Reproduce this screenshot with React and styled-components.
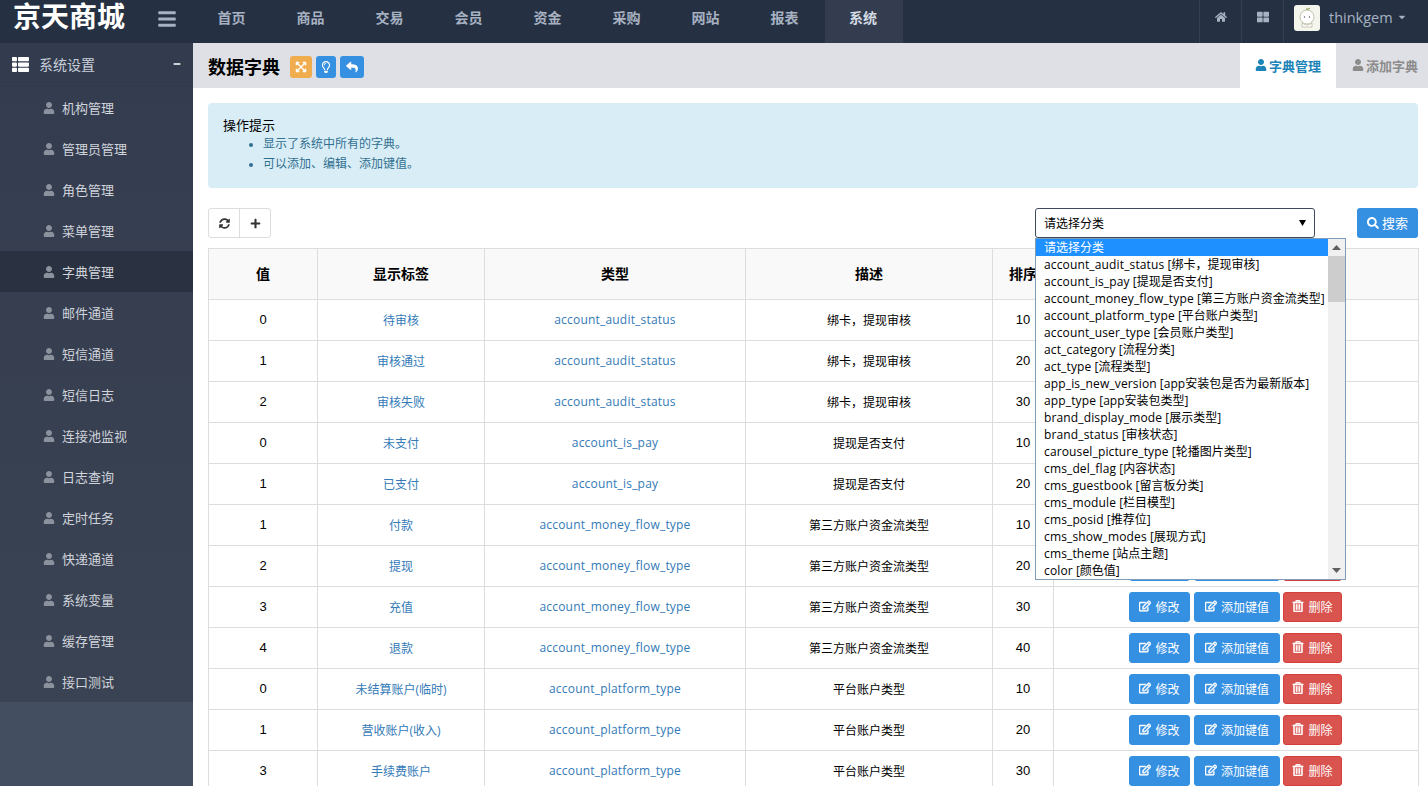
import React from 'react';
import styled, { createGlobalStyle } from 'styled-components';
import { FaUser, FaHome, FaThLarge, FaThList, FaSearch, FaPlus, FaRegEdit, FaRegTrashAlt, FaReply, FaExpandArrowsAlt, FaRegLightbulb, FaSyncAlt, FaBars, FaMinus, FaCaretDown } from 'react-icons/fa';

const Global = createGlobalStyle`
  html, body { margin: 0; padding: 0; height: 100%; overflow: hidden; background: #fff; }
  * { box-sizing: border-box; }
  body { font-family: "Liberation Sans", "Noto Sans CJK SC", sans-serif; font-size: 13px; color: #000; }
`;
const Page = styled.div`width: 1428px; height: 786px; overflow: hidden; display: flex; flex-direction: column;`;
const Top = styled.header`height: 43px; flex: none; background: #253142; display: flex; align-items: stretch;`;
const Logo = styled.div`width: 149px; padding-left: 13px; font-size: 28px; font-weight: 700; color: #fff; line-height: 35px; white-space: nowrap;`;
const Burger = styled.div`width: 44px; display: flex; align-items: center; color: #a7b1c2; font-size: 20px; padding-left: 8px; padding-bottom: 6px;`;
const Nav = styled.nav`display: flex; flex: 1;`;
const NavItem = styled.div`
  width: ${p => p.$active ? 78 : 79}px; text-align: center; padding-right: 2px; line-height: 37px; font-size: 14px; font-weight: 700;
  color: ${p => p.$active ? '#d5dbe3' : '#a7b1c2'}; background: ${p => p.$active ? '#333d4f' : 'transparent'};
`;
const TopRight = styled.div`display: flex; align-items: stretch; width: 229px;`;
const TopIcon = styled.div`width: 42px; border-left: 1px solid #334052; display: flex; justify-content: center; padding-top: 11px; color: #a7b1c2; font-size: 12px;`;
const User = styled.div`flex: 1; border-left: 1px solid #334052; display: flex; align-items: flex-start; padding: 5px 0 0 10px; color: #a7b1c2; font-size: 15px;`;
const Avatar = styled.svg`width: 26px; height: 26px; border-radius: 3px; background: #f4f6ee; flex: none;`;
const UserName = styled.span`margin: 3px 4px 0 9px; font-family: "Open Sans", "Liberation Sans", sans-serif; font-size: 14.5px;`;
const Caret = styled.span`margin-top: 7px; font-size: 10px;`;
const Body = styled.div`display: flex; flex: 1; min-height: 0;`;
const Side = styled.aside`width: 193px; flex: none; background: #434f60;`;
const SideHead = styled.div`
  height: 44px; background: #333c4f; border-bottom: 1px solid #2d3a4a; color: #c9cfd9; display: flex; align-items: center;
  padding: 0 12px 1px; font-size: 14px; font-weight: 400;
  svg { color: #fff; font-size: 17px; margin-right: 10px; }
  span { flex: 1; }
`;
const SideMinus = styled(FaMinus)`&& { font-size: 8px; margin: 0; }`;
const SideList = styled.div`background: linear-gradient(#343c4f, #3a4353);`;
const SideItem = styled.div`
  height: 41px; display: flex; align-items: center; padding-left: 43px; color: #d0d4db; font-size: 13px; font-weight: 400;
  background: ${p => p.$active ? '#2a3140' : 'transparent'};
  svg { color: #8b929d; font-size: 12px; margin-right: 7px; }
`;
const Main = styled.main`flex: 1; min-width: 0; display: flex; flex-direction: column;`;
const SubHead = styled.div`height: 45px; flex: none; background: #dfe0e5; display: flex; align-items: stretch; padding-left: 15px;`;
const Title = styled.h1`margin: 0; font-size: 18px; font-weight: 700; line-height: 50px; color: #000; margin-right: 10px;`;
const Tools = styled.div`display: flex; gap: 4px; align-items: center; flex: 1; padding-top: 2px;`;
const Tool = styled.div`
  width: ${p => p.$w}px; height: 22px; border-radius: 3px; background: ${p => p.$c}; color: #fff; display: flex;
  align-items: center; justify-content: center; font-size: 12px;
`;
const Tab = styled.div`
  display: flex; align-items: center; gap: 2px; font-weight: 700; font-size: 13px; padding-bottom: 1px;
  width: ${p => p.$w}px; background: ${p => p.$active ? '#fff' : 'transparent'}; color: ${p => p.$active ? '#1c84b8' : '#8c8c8c'};
  padding-left: ${p => p.$active ? 15 : 16}px; svg { font-size: 12px; }
`;
const Content = styled.div`flex: 1; min-height: 0; padding: 15px 10px 0 15px; position: relative;`;
const Alert = styled.div`height: 85px; background: #d9edf7; border-radius: 4px; padding: 15px; font-size: 13px; line-height: 16px;`;
const AlertList = styled.ul`margin: 0; padding-left: 40px; color: #31708f; font-size: 12px; li { line-height: 20px; }`;
const Bar = styled.div`display: flex; margin-top: 20px; height: 30px; align-items: stretch;`;
const Group = styled.div`display: flex; width: 63px; border: 1px solid #ddd; border-radius: 3px;`;
const GroupBtn = styled.div`flex: 1; display: flex; align-items: center; justify-content: center; color: #333; font-size: 11px; & + & { border-left: 1px solid #ddd; }`;
const Select = styled.div`
  margin-left: 764px; width: 280px; border: 1px solid #3f4a5e; border-radius: 3px; display: flex; align-items: center; justify-content: space-between;
  padding: 0 8px 1px 8px; font-size: 12px;
`;
const Arrow = styled.svg`width: 7px; height: 6px; fill: #000;`;
const Search = styled.div`
  margin-left: 42px; width: 61px; background: #3690e2; color: #fff; border-radius: 3px; display: flex; align-items: center; justify-content: center; gap: 3px; font-size: 13px; padding-bottom: 1px;
  svg { font-size: 12px; }
`;
const Table = styled.table`width: 1210px; margin-top: 10px; border-collapse: collapse; table-layout: fixed;`;
const Th = styled.th`height: 51px; background: #f9f9f9; border: 1px solid #ddd; font-size: 14px; font-weight: 700; text-align: center; padding: 0 0 3px;`;
const Td = styled.td`height: 41px; border: 1px solid #ddd; text-align: center; padding: 0 0 1px; font-size: 12px; font-family: "Open Sans", "Noto Sans CJK SC", sans-serif; color: ${p => p.$link ? '#337ab7' : '#000'};`;
const TypeCell = styled(Td)`letter-spacing: .2px;`;
const Num = styled(Td)`font-family: "Liberation Sans", sans-serif; font-size: 13px;`;
const Ops = styled.div`display: flex; justify-content: center; gap: 3px; padding-right: 1px; & > :first-child { margin-right: 1px; }`;
const Btn = styled.div`
  height: 30px; width: ${p => p.$w}px; border-radius: 3px; color: #fff; display: flex; align-items: center; justify-content: center; gap: 4px; font-size: 12px; padding-bottom: 1px;
  font-family: "Liberation Sans", "Noto Sans CJK SC", sans-serif;
  background: ${p => p.$red ? '#d9534f' : '#3690e2'}; border: 1px solid ${p => p.$red ? '#d43f3a' : '#3690e2'};
  svg { font-size: 12px; stroke: currentColor; stroke-width: 24; }
`;
const Drop = styled.div`
  position: absolute; left: 842px; top: 150px; width: 311px; height: 342px; background: #fff; border: 1px solid #7f9db9; display: flex; z-index: 5;
  font-family: "Open Sans", "Noto Sans CJK SC", sans-serif; font-size: 12px;
`;
const Options = styled.div`flex: 1; min-width: 0;`;
const Opt = styled.div`height: 17px; line-height: 17px; padding-left: 8px; white-space: nowrap; background: ${p => p.$sel ? '#1e90ff' : 'transparent'}; color: ${p => p.$sel ? '#fff' : '#000'};`;
const OptKey = styled.span`letter-spacing: .14px;`;
const Scroll = styled.div`width: 17px; background: #f0f0f0; display: flex; flex-direction: column; position: relative;`;
const ScrollBtn = styled.div`height: 17px; display: flex; align-items: center; justify-content: center; svg { width: 9px; height: 5px; fill: #606060; }`;
const Thumb = styled.div`height: 46px; background: #cdcdcd;`;
const ScrollFill = styled.div`flex: 1;`;

const menu = ['机构管理','管理员管理','角色管理','菜单管理','字典管理','邮件通道','短信通道','短信日志','连接池监视','日志查询','定时任务','快递通道','系统变量','缓存管理','接口测试'];
const navs = ['首页','商品','交易','会员','资金','采购','网站','报表','系统'];
const opts = ['请选择分类','account_audit_status [绑卡，提现审核]','account_is_pay [提现是否支付]','account_money_flow_type [第三方账户资金流类型]','account_platform_type [平台账户类型]','account_user_type [会员账户类型]','act_category [流程分类]','act_type [流程类型]','app_is_new_version [app安装包是否为最新版本]','app_type [app安装包类型]','brand_display_mode [展示类型]','brand_status [审核状态]','carousel_picture_type [轮播图片类型]','cms_del_flag [内容状态]','cms_guestbook [留言板分类]','cms_module [栏目模型]','cms_posid [推荐位]','cms_show_modes [展现方式]','cms_theme [站点主题]','color [颜色值]'];
const rows = [
  ['0','待审核','account_audit_status','绑卡，提现审核','10'],
  ['1','审核通过','account_audit_status','绑卡，提现审核','20'],
  ['2','审核失败','account_audit_status','绑卡，提现审核','30'],
  ['0','未支付','account_is_pay','提现是否支付','10'],
  ['1','已支付','account_is_pay','提现是否支付','20'],
  ['1','付款','account_money_flow_type','第三方账户资金流类型','10'],
  ['2','提现','account_money_flow_type','第三方账户资金流类型','20'],
  ['3','充值','account_money_flow_type','第三方账户资金流类型','30'],
  ['4','退款','account_money_flow_type','第三方账户资金流类型','40'],
  ['0','未结算账户(临时)','account_platform_type','平台账户类型','10'],
  ['1','营收账户(收入)','account_platform_type','平台账户类型','20'],
  ['3','手续费账户','account_platform_type','平台账户类型','30'],
];
const widths = [109,167,261,247,61,365];

function Option({ text, sel }) {
  const at = text.indexOf(' [');
  if (at < 0) return <Opt $sel={sel}>{text}</Opt>;
  return <Opt $sel={sel}><OptKey>{text.slice(0, at)}</OptKey>{text.slice(at)}</Opt>;
}

export default function App() {
  return (
    <Page>
      <Global />
      <Top>
        <Logo>京天商城</Logo>
        <Burger><FaBars /></Burger>
        <Nav>{navs.map(n => <NavItem key={n} $active={n === '系统'}>{n}</NavItem>)}</Nav>
        <TopRight>
          <TopIcon><FaHome /></TopIcon>
          <TopIcon><FaThLarge /></TopIcon>
          <User>
            <Avatar viewBox="0 0 26 26">
              <path d="M13 3v3M13 5l3-2" stroke="#7d9a4a" strokeWidth="1" fill="none" />
              <circle cx="13" cy="12" r="7" fill="#fff" stroke="#a9a98c" strokeWidth=".7" />
              <path d="M8 18q5 4 10 0v4H8z" fill="#fff" stroke="#a9a98c" strokeWidth=".6" />
              <circle cx="10.5" cy="12" r=".7" fill="#555" /><circle cx="15.5" cy="12" r=".7" fill="#555" />
            </Avatar>
            <UserName>thinkgem</UserName>
            <Caret><FaCaretDown /></Caret>
          </User>
        </TopRight>
      </Top>
      <Body>
        <Side>
          <SideHead><FaThList /><span>系统设置</span><SideMinus /></SideHead>
          <SideList>
            {menu.map(m => <SideItem key={m} $active={m === '字典管理'}><FaUser />{m}</SideItem>)}
          </SideList>
        </Side>
        <Main>
          <SubHead>
            <Title>数据字典</Title>
            <Tools>
              <Tool $w={22} $c="#f0ad4e"><FaExpandArrowsAlt /></Tool>
              <Tool $w={20} $c="#3690e2"><FaRegLightbulb /></Tool>
              <Tool $w={24} $c="#3690e2"><FaReply /></Tool>
            </Tools>
            <Tab $active $w={96}><FaUser />字典管理</Tab>
            <Tab $w={92}><FaUser />添加字典</Tab>
          </SubHead>
          <Content>
            <Alert>
              操作提示
              <AlertList>
                <li>显示了系统中所有的字典。</li>
                <li>可以添加、编辑、添加键值。</li>
              </AlertList>
            </Alert>
            <Bar>
              <Group><GroupBtn><FaSyncAlt /></GroupBtn><GroupBtn><FaPlus /></GroupBtn></Group>
              <Select>请选择分类<Arrow viewBox="0 0 7 6"><path d="M0 0h7L3.5 6z" /></Arrow></Select>
              <Search><FaSearch />搜索</Search>
            </Bar>
            <Drop>
              <Options>{opts.map((o, i) => <Option key={o} text={o} sel={i === 0} />)}</Options>
              <Scroll>
                <ScrollBtn><svg viewBox="0 0 9 5"><path d="M4.5 0L9 5H0z" /></svg></ScrollBtn>
                <Thumb />
                <ScrollFill />
                <ScrollBtn><svg viewBox="0 0 9 5"><path d="M0 0h9L4.5 5z" /></svg></ScrollBtn>
              </Scroll>
            </Drop>
            <Table>
              <colgroup>{widths.map((w, i) => <col key={i} width={w} />)}</colgroup>
              <thead>
                <tr><Th>值</Th><Th>显示标签</Th><Th>类型</Th><Th>描述</Th><Th>排序</Th><Th>操作</Th></tr>
              </thead>
              <tbody>
                {rows.map((r, i) => (
                  <tr key={i}>
                    <Num>{r[0]}</Num>
                    <Td $link>{r[1]}</Td>
                    <TypeCell $link>{r[2]}</TypeCell>
                    <Td>{r[3]}</Td>
                    <Num>{r[4]}</Num>
                    <Td>
                      <Ops>
                        <Btn $w={61}><FaRegEdit />修改</Btn>
                        <Btn $w={86}><FaRegEdit />添加键值</Btn>
                        <Btn $w={59} $red><FaRegTrashAlt />删除</Btn>
                      </Ops>
                    </Td>
                  </tr>
                ))}
              </tbody>
            </Table>
          </Content>
        </Main>
      </Body>
    </Page>
  );
}
